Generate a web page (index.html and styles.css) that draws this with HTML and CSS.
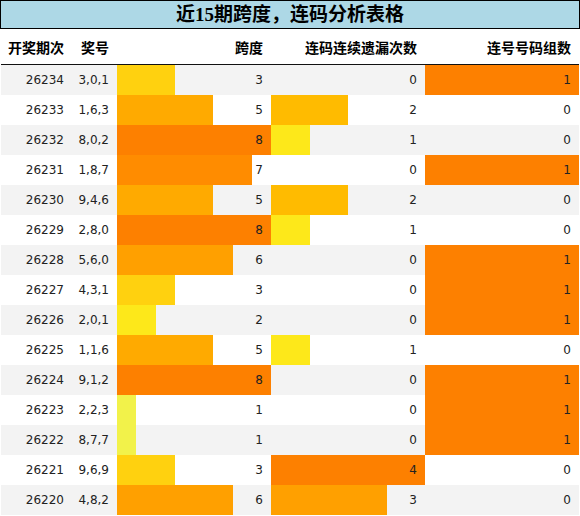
FILE: index.html
```html
<!DOCTYPE html>
<html lang="zh">
<head>
<meta charset="utf-8">
<link rel="stylesheet" href="styles.css">
</head>
<body>
<div class="page">
  <div class="title">近15期跨度，连码分析表格</div>
  <div class="table">
    <div class="row head">
      <div class="cell">开奖期次</div>
      <div class="cell">奖号</div>
      <div class="cell">跨度</div>
      <div class="cell">连码连续遗漏次数</div>
      <div class="cell">连号号码组数</div>
    </div>
    <div class="row"><div class="cell">26234</div><div class="cell">3,0,1</div><div class="cell"><span class="bar c3" style="width:37.5%"></span><span class="val">3</span></div><div class="cell"><span class="val">0</span></div><div class="cell"><span class="bar c8" style="width:100%"></span><span class="val">1</span></div></div>
    <div class="row"><div class="cell">26233</div><div class="cell">1,6,3</div><div class="cell"><span class="bar c5" style="width:62.5%"></span><span class="val">5</span></div><div class="cell"><span class="bar c4" style="width:50%"></span><span class="val">2</span></div><div class="cell"><span class="val">0</span></div></div>
    <div class="row"><div class="cell">26232</div><div class="cell">8,0,2</div><div class="cell"><span class="bar c8" style="width:100%"></span><span class="val">8</span></div><div class="cell"><span class="bar c2" style="width:25%"></span><span class="val">1</span></div><div class="cell"><span class="val">0</span></div></div>
    <div class="row"><div class="cell">26231</div><div class="cell">1,8,7</div><div class="cell"><span class="bar c7" style="width:87.5%"></span><span class="val">7</span></div><div class="cell"><span class="val">0</span></div><div class="cell"><span class="bar c8" style="width:100%"></span><span class="val">1</span></div></div>
    <div class="row"><div class="cell">26230</div><div class="cell">9,4,6</div><div class="cell"><span class="bar c5" style="width:62.5%"></span><span class="val">5</span></div><div class="cell"><span class="bar c4" style="width:50%"></span><span class="val">2</span></div><div class="cell"><span class="val">0</span></div></div>
    <div class="row"><div class="cell">26229</div><div class="cell">2,8,0</div><div class="cell"><span class="bar c8" style="width:100%"></span><span class="val">8</span></div><div class="cell"><span class="bar c2" style="width:25%"></span><span class="val">1</span></div><div class="cell"><span class="val">0</span></div></div>
    <div class="row"><div class="cell">26228</div><div class="cell">5,6,0</div><div class="cell"><span class="bar c6" style="width:75%"></span><span class="val">6</span></div><div class="cell"><span class="val">0</span></div><div class="cell"><span class="bar c8" style="width:100%"></span><span class="val">1</span></div></div>
    <div class="row"><div class="cell">26227</div><div class="cell">4,3,1</div><div class="cell"><span class="bar c3" style="width:37.5%"></span><span class="val">3</span></div><div class="cell"><span class="val">0</span></div><div class="cell"><span class="bar c8" style="width:100%"></span><span class="val">1</span></div></div>
    <div class="row"><div class="cell">26226</div><div class="cell">2,0,1</div><div class="cell"><span class="bar c2" style="width:25%"></span><span class="val">2</span></div><div class="cell"><span class="val">0</span></div><div class="cell"><span class="bar c8" style="width:100%"></span><span class="val">1</span></div></div>
    <div class="row"><div class="cell">26225</div><div class="cell">1,1,6</div><div class="cell"><span class="bar c5" style="width:62.5%"></span><span class="val">5</span></div><div class="cell"><span class="bar c2" style="width:25%"></span><span class="val">1</span></div><div class="cell"><span class="val">0</span></div></div>
    <div class="row"><div class="cell">26224</div><div class="cell">9,1,2</div><div class="cell"><span class="bar c8" style="width:100%"></span><span class="val">8</span></div><div class="cell"><span class="val">0</span></div><div class="cell"><span class="bar c8" style="width:100%"></span><span class="val">1</span></div></div>
    <div class="row"><div class="cell">26223</div><div class="cell">2,2,3</div><div class="cell"><span class="bar c1" style="width:12.5%"></span><span class="val">1</span></div><div class="cell"><span class="val">0</span></div><div class="cell"><span class="bar c8" style="width:100%"></span><span class="val">1</span></div></div>
    <div class="row"><div class="cell">26222</div><div class="cell">8,7,7</div><div class="cell"><span class="bar c1" style="width:12.5%"></span><span class="val">1</span></div><div class="cell"><span class="val">0</span></div><div class="cell"><span class="bar c8" style="width:100%"></span><span class="val">1</span></div></div>
    <div class="row"><div class="cell">26221</div><div class="cell">9,6,9</div><div class="cell"><span class="bar c3" style="width:37.5%"></span><span class="val">3</span></div><div class="cell"><span class="bar c8" style="width:100%"></span><span class="val">4</span></div><div class="cell"><span class="val">0</span></div></div>
    <div class="row"><div class="cell">26220</div><div class="cell">4,8,2</div><div class="cell"><span class="bar c6" style="width:75%"></span><span class="val">6</span></div><div class="cell"><span class="bar c6" style="width:75%"></span><span class="val">3</span></div><div class="cell"><span class="val">0</span></div></div>
  </div>
</div>
</body>
</html>
```

FILE: styles.css
```css
html, body {
  margin: 0;
  padding: 0;
  background: #fff;
}
.page {
  width: 580px;
}
.title {
  height: 27px;
  border: 1px solid #000;
  background: #add8e6;
  color: #000;
  font-family: "Liberation Serif", "Noto Sans CJK SC", serif;
  font-weight: bold;
  font-size: 19px;
  line-height: 27px;
  text-align: center;
}
.table {
  margin: 0 1px;
  width: 578px;
}
.row {
  display: grid;
  grid-template-columns: 71px 45px 154px 154px 154px;
  height: 30px;
  font-family: "DejaVu Sans", sans-serif;
  font-size: 12px;
  color: #222;
}
.row:nth-child(even) {
  background: #f3f3f3;
}
.row.head {
  height: 35px;
  border-bottom: 1px solid #111;
  background: #fff;
  font-family: "Noto Sans CJK SC", sans-serif;
  font-weight: bold;
  font-size: 14px;
  color: #000;
}
.cell {
  position: relative;
  display: flex;
  align-items: center;
  justify-content: flex-end;
  padding-right: 8px;
}
.val {
  position: relative;
}
.bar {
  position: absolute;
  left: 0;
  top: 0;
  bottom: 0;
}
.c1 { background: #f2f24a; }
.c2 { background: #fde81a; }
.c3 { background: #ffd10f; }
.c4 { background: #ffbb00; }
.c5 { background: #ffaa00; }
.c6 { background: #ffa000; }
.c7 { background: #ff8c00; }
.c8 { background: #fd8000; }
```
